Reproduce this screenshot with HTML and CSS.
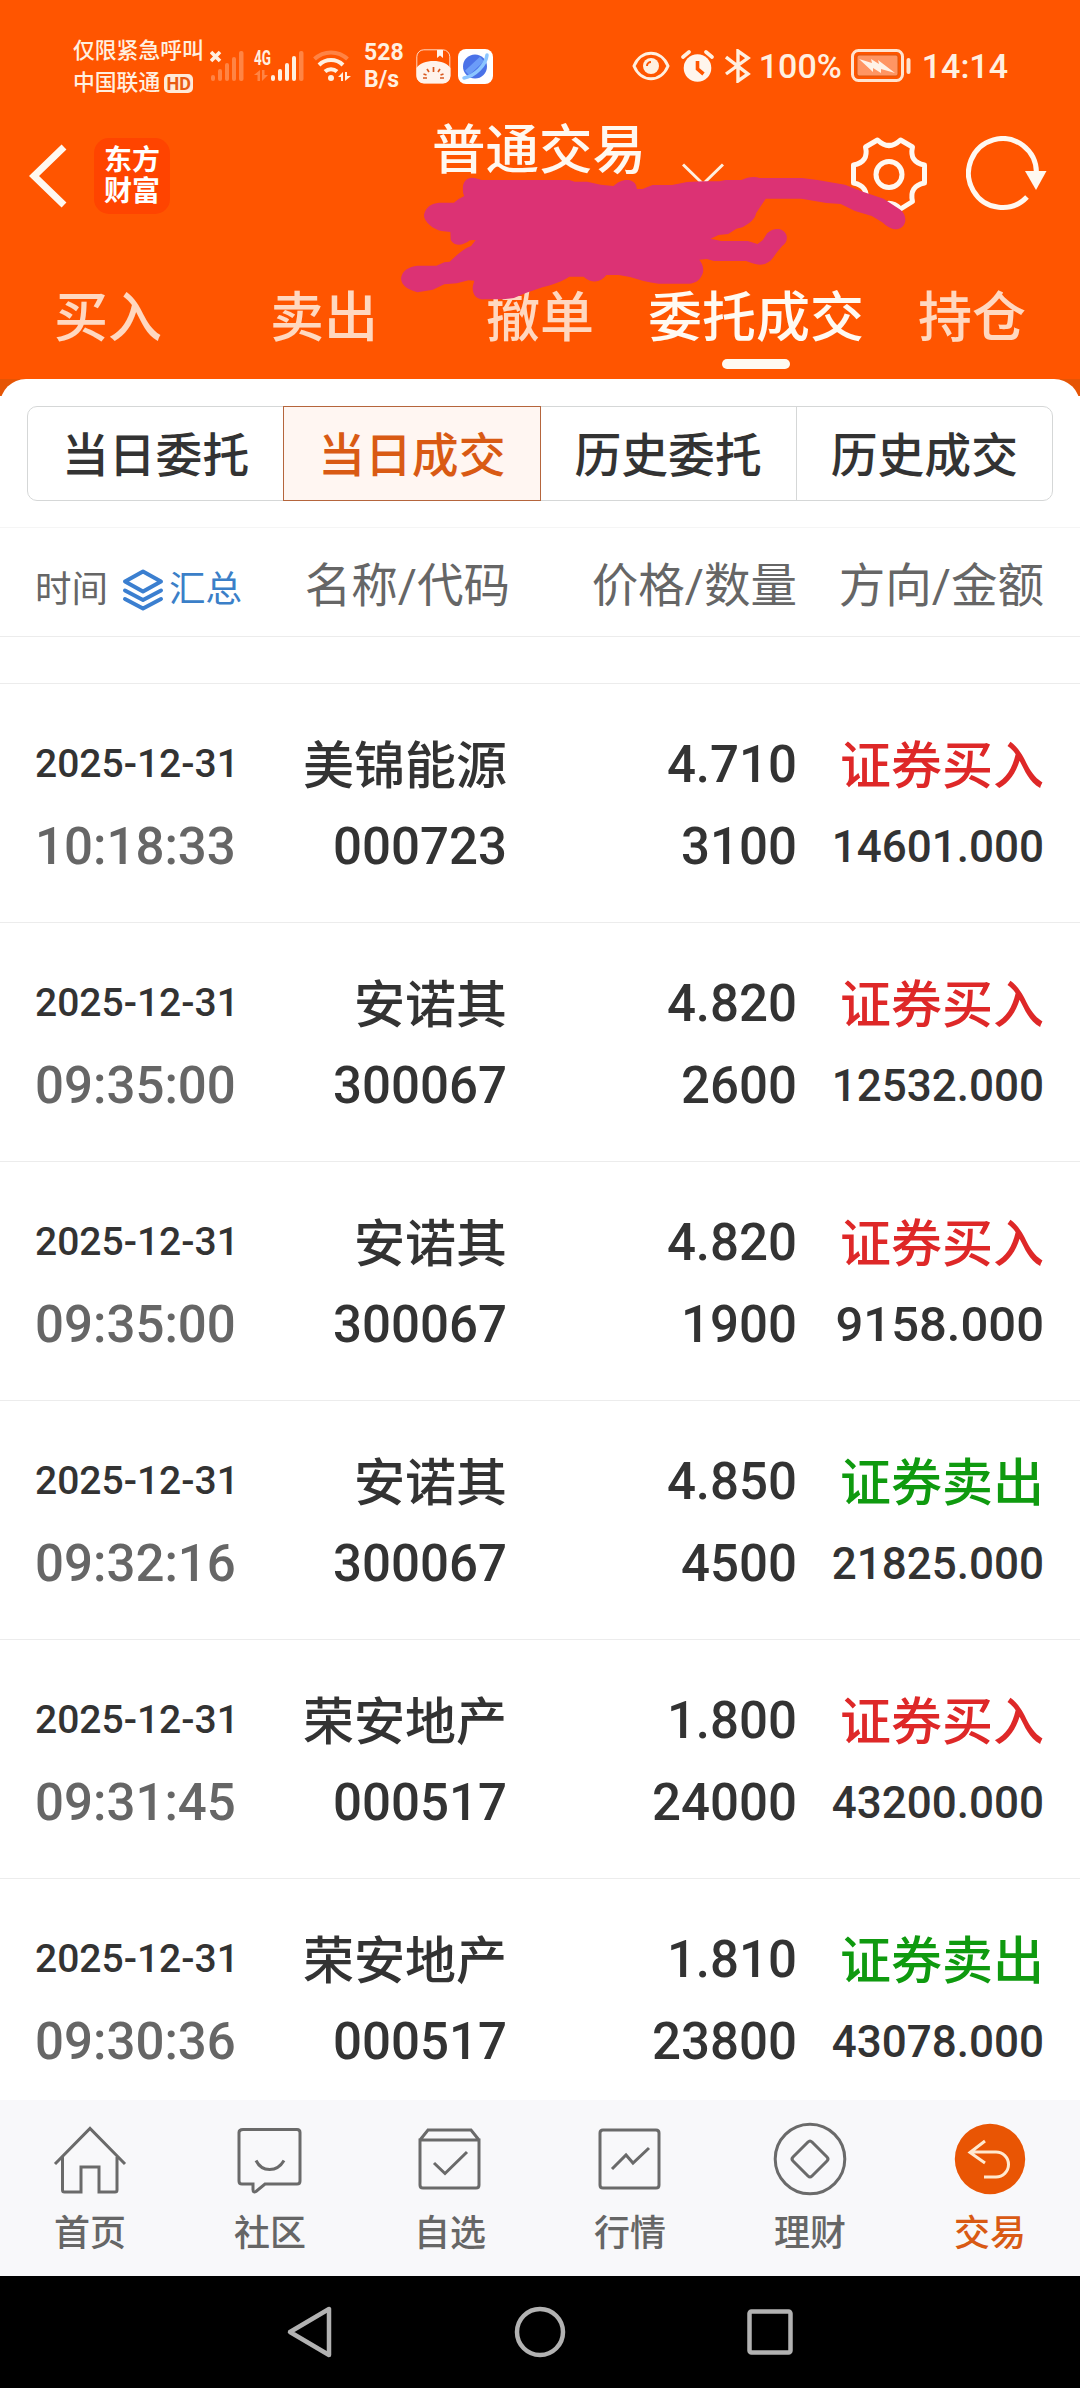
FILE: index.html
```html
<!DOCTYPE html>
<html lang="zh-CN">
<head>
  <meta charset="UTF-8"/><meta name="viewport" content="width=device-width, initial-scale=1.0"/>
  <title>普通交易 - 当日成交</title>
  <link rel="stylesheet" href="styles.css">
</head>
<body>
  <header class="top">
    <div class="status">
      <div class="carrier">
        <span>仅限紧急呼叫</span>
        <span class="op">中国联通<b class="hd">HD</b></span>
      </div>
      <svg class="sig1" width="34" height="32" viewBox="0 0 34 32" fill="#fff0e0">
        <path d="M1 2l9 9M10 2l-9 9" stroke="#fff0e0" stroke-width="3.600"/>
        <g opacity=".3"><rect x="1" y="25" width="4" height="6" rx="2"/><rect x="8" y="19" width="4" height="12" rx="2"/><rect x="15" y="13" width="4" height="18" rx="2"/><rect x="22" y="7" width="4" height="24" rx="2"/><rect x="29" y="1" width="4.500" height="30" rx="2"/></g>
      </svg>
      <svg class="sig2" width="50" height="32" viewBox="0 0 50 32" fill="#fff0e0">
        <text x="0" y="15" class="g4" textLength="17" lengthAdjust="spacingAndGlyphs">4G</text>
        <g opacity=".3"><path d="M6 20v11H3.500v-6H0zM8 20h2.500v5H14L8 31z"/><rect x="45" y="1" width="4.500" height="30" rx="2"/></g>
        <rect x="17" y="25" width="4" height="6" rx="2"/><rect x="24" y="19" width="4" height="12" rx="2"/><rect x="31" y="13" width="4" height="18" rx="2"/><rect x="38" y="6" width="4" height="25" rx="2"/>
      </svg>
      <svg class="wifi" width="40" height="32" viewBox="0 0 40 32" fill="none" stroke="#fff0e0" stroke-width="4">
        <path d="M1.500 9a24 24 0 0 1 33 0" opacity=".3"/>
        <path d="M6 15a17 17 0 0 1 24 0M12 21.500a9 9 0 0 1 12 0"/>
        <circle cx="18" cy="28" r="3" fill="#fff0e0" stroke="none"/>
        <path d="M30 22v9h-2v-4h-3zM32 22h2v4h4l-6 5z" fill="#fff0e0" stroke="none"/>
      </svg>
      <div class="speed"><span>528</span><span>B/s</span></div>
      <svg class="app1" width="35" height="35" viewBox="0 0 35 35">
        <rect x=".8" y=".8" width="33" height="33" rx="7" fill="none" stroke="#ffd9c4"/>
        <path d="M.5 19C6 9.500 29 9.500 34.500 19v8a7.500 7.500 0 0 1-7.500 7.500H8A7.500 7.500 0 0 1 .5 27z" fill="#fff3ec"/>
        <path d="M21 1h6v8l-3-2.500L21 9z" fill="#fff3ec"/>
        <path d="M17.500 18v5M11 20l2 3M24 20l-2 3M7.500 25l3 1M27.500 25l-3 1M7 29h4M24 29h4" stroke="#d95a20" stroke-width="1.700"/>
      </svg>
      <svg class="app2" width="35" height="35" viewBox="0 0 35 35">
        <rect width="35" height="35" rx="8" fill="#fff"/>
        <circle cx="17" cy="17.500" r="12" fill="#4a72e8"/>
        <path d="M9 24L24 10" stroke="#6b9cf8" stroke-width="6"/>
        <path d="M6 29C17 27 28 16 29 6" stroke="#8cc6ff" stroke-width="3.500" fill="none" stroke-linecap="round"/>
      </svg>
      <div class="right">
        <svg width="38" height="30" viewBox="0 0 38 30"><path d="M2 15C9-2 29-2 36 15C29 32 9 32 2 15z" fill="none" stroke="#fff0e0" stroke-width="3"/><circle cx="19" cy="15" r="8" fill="#fff0e0"/><path d="M15 15a4 4 0 0 1 4-4" stroke="#ff5500" stroke-width="2" fill="none"/></svg>
        <svg class="alarm" width="33" height="32" viewBox="0 0 33 32"><circle cx="16.500" cy="18" r="13.800" fill="#fff5ec"/><path d="M2 7l6-5M31 7l-6-5" stroke="#fff0e0" stroke-width="3.600" stroke-linecap="round"/><path d="M16.500 11v8l6 5" stroke="#ff5500" stroke-width="3.600" fill="none"/></svg>
        <svg class="bt" width="26" height="34" viewBox="0 0 26 34" fill="none" stroke="#fff0e0" stroke-width="3.400"><path d="M1 8l22 17-10 7V2l10 7L1 25"/></svg>
        <span class="pct">100%</span>
        <svg class="batt" width="60" height="34" viewBox="0 0 60 34"><rect x="1.500" y="1.500" width="50" height="30" rx="6" fill="none" stroke="#ffe3cf" stroke-width="3"/><rect x="6" y="6" width="41" height="21" rx="2" fill="#ff9563" stroke="#d9560f"/><path d="M8 10l13 4-1-4 8 5-1-4 17 13-14-4v4l-8-5v4z" fill="#fff3e8"/><rect x="55.500" y="9" width="4" height="16" rx="2" fill="#ffe3cf"/></svg>
        <span class="clock">14:14</span>
      </div>
    </div>
    <div class="bar">
      <svg class="back" width="38" height="64" viewBox="0 0 38 64" fill="none" stroke="#fff8f0" stroke-width="7"><path d="M35 3L5 32l30 29"/></svg>
      <div class="logo"><span>东方</span><span>财富</span></div>
      <h1>普通交易</h1>
      <svg class="down" width="42" height="24" viewBox="0 0 42 24" fill="none" stroke="#fff0e0" stroke-width="3"><path d="M1 1.500l20 19.500 20-19.500"/></svg>
      <svg class="gear" width="80" height="78" viewBox="0 0 80 78" fill="none" stroke="#fff8f0" stroke-width="5" stroke-linejoin="round">
        <path d="M28.500 4Q40 15 51.500 4L63.500 11Q60 26 75.500 29V47Q60 50 63.500 65.500L51.500 73Q40 62 28.500 73L16.500 65.500Q20 50 4.500 47V29Q20 26 16.500 11z"/>
        <circle cx="40" cy="38.500" r="13"/>
      </svg>
      <svg class="reload" width="82" height="78" viewBox="0 0 82 78"><path d="M61 61A34 34.500 0 1 1 70.500 37" fill="none" stroke="#fff8f0" stroke-width="5"/><path d="M59 35h21.500L70 54z" fill="#fff8f0"/></svg>
    </div>
    <nav class="tabs">
      <a>买入</a><a>卖出</a><a>撤单</a><a class="on">委托成交</a><a>持仓</a>
    </nav>
    <!-- 账号涂抹 -->
    <svg class="scrawl" width="560" height="220" viewBox="0 0 1568 660" preserveAspectRatio="none">
      <path fill="#dc3274" d="M232 264C232 240 250 228 272 236L285 240H530L545 245H580L618 254L654 258C665 246 680 238 697 240C710 243 719 252 719 267H735L763 255H818L860 246L905 244H950L968 240H1012C1030 230 1050 228 1063 234H1182L1225 240L1302 254L1352 275L1410 296L1455 328C1468 338 1471 350 1471 362C1469 378 1457 389 1440 388C1425 385 1412 372 1405 366L1377 348L1330 333L1290 312L1250 309L1180 296H1080L1065 320L1053 340C1050 358 1035 370 1015 382L998 386L975 402L948 405L926 416L955 423H1030L1057 432L1072 420L1084 400C1102 382 1128 382 1138 405C1142 422 1135 432 1126 438L1112 456L1100 474C1085 495 1065 498 1043 490L1025 483H935L915 477L894 479C904 492 908 508 903 522C896 540 885 550 865 551H780C750 547 725 540 700 531L668 525H634C618 547 595 553 570 530H530C510 545 485 553 455 562L410 578L375 594L345 598H290C267 600 257 578 260 558L264 542L248 541L215 550L180 553L148 569L105 577C80 570 59 557 59 535C62 512 80 500 105 497H158L180 487L195 485C215 465 232 447 255 438L268 420L252 421C230 438 210 440 198 420L197 396L172 393C150 388 123 367 123 345C128 320 145 310 165 308H207L220 297L236 288C232 280 232 275 232 264Z"/>
    </svg>
  </header>

  <main>
    <div class="seg"><a>当日委托</a><a class="on">当日成交</a><a>历史委托</a><a>历史成交</a></div>
    <div class="thead">
      <div class="tm">时间
        <svg width="42" height="42" viewBox="0 0 42 42" fill="none" stroke="#3b7fd0" stroke-width="4" stroke-linejoin="round" stroke-linecap="round"><path d="M21 2.500L39 12.500 21 22.500 3 12.500zM3 21.500l18 9.500 18-9.500M3 30l18 9.500L39 30"/></svg>
        <span class="sum">汇总</span>
      </div>
      <div class="nm">名称/代码</div><div>价格/数量</div><div>方向/金额</div>
    </div>
    <div class="rest"></div>

    <div class="row">
      <div class="t"><p class="date">2025-12-31</p><p class="time">10:18:33</p></div>
      <div><p class="cn">美锦能源</p><p>000723</p></div>
      <div><p>4.710</p><p>3100</p></div>
      <div><p class="cn buy">证券买入</p><p class="amt">14601.000</p></div>
    </div>
    <div class="row">
      <div class="t"><p class="date">2025-12-31</p><p class="time">09:35:00</p></div>
      <div><p class="cn">安诺其</p><p>300067</p></div>
      <div><p>4.820</p><p>2600</p></div>
      <div><p class="cn buy">证券买入</p><p class="amt">12532.000</p></div>
    </div>
    <div class="row">
      <div class="t"><p class="date">2025-12-31</p><p class="time">09:35:00</p></div>
      <div><p class="cn">安诺其</p><p>300067</p></div>
      <div><p>4.820</p><p>1900</p></div>
      <div><p class="cn buy">证券买入</p><p class="amt big">9158.000</p></div>
    </div>
    <div class="row">
      <div class="t"><p class="date">2025-12-31</p><p class="time">09:32:16</p></div>
      <div><p class="cn">安诺其</p><p>300067</p></div>
      <div><p>4.850</p><p>4500</p></div>
      <div><p class="cn sell">证券卖出</p><p class="amt">21825.000</p></div>
    </div>
    <div class="row">
      <div class="t"><p class="date">2025-12-31</p><p class="time">09:31:45</p></div>
      <div><p class="cn">荣安地产</p><p>000517</p></div>
      <div><p>1.800</p><p>24000</p></div>
      <div><p class="cn buy">证券买入</p><p class="amt">43200.000</p></div>
    </div>
    <div class="row">
      <div class="t"><p class="date">2025-12-31</p><p class="time">09:30:36</p></div>
      <div><p class="cn">荣安地产</p><p>000517</p></div>
      <div><p>1.810</p><p>23800</p></div>
      <div><p class="cn sell">证券卖出</p><p class="amt">43078.000</p></div>
    </div>
  </main>

  <nav class="menu">
    <a><svg viewBox="0 0 76 76"><path d="M3 44L38 8.500 73 44M10.500 37v33q0 2 2 2H29V47h18v25h16q2 0 2-2V37"/></svg>首页</a>
    <a><svg viewBox="0 0 76 76"><path d="M11 9.500h54q3 0 3 3V61q0 3-3 3H33l-9 7.500q-3 1.500-3-2V64H10q-3 0-3-3V12.500q0-3 4-3zM24 40.500c6 12 21 12 28 0"/></svg>社区</a>
    <a><svg viewBox="0 0 76 76"><path d="M8 20v45q0 3 3 3h53q3 0 3-3V20zM8 20l8-10h43l8 10M22 43l11 10.500L55 32"/></svg>自选</a>
    <a><svg viewBox="0 0 76 76"><path d="M11 10h53q3 0 3 3v52q0 3-3 3H11q-3 0-3-3V13q0-3 3-3zM20 49l14-14 7 8 16-15"/></svg>行情</a>
    <a><svg viewBox="0 0 76 76"><circle cx="38" cy="39" r="34.800"/><path d="M36 22q2-2 4 0l15 15q2 2 0 4L40 56q-2 2-4 0L21 41q-2-2 0-4z"/></svg>理财</a>
    <a class="on"><svg viewBox="0 0 76 76"><circle cx="38" cy="39" r="35.200" class="disc"/><path class="arr" d="M33 21L18 32.500 33 43M19 32h25a12.500 12.500 0 0 1 0 25H32"/></svg>交易</a>
  </nav>

  <footer class="sys">
    <svg width="50" height="56" viewBox="0 0 50 56"><path d="M44 5v46L5 28z"/></svg>
    <svg width="54" height="56" viewBox="0 0 54 56"><circle cx="27" cy="28" r="23"/></svg>
    <svg width="50" height="56" viewBox="0 0 50 56"><rect x="4.500" y="7.500" width="41" height="41" rx="2"/></svg>
  </footer>
</body>
</html>
```

FILE: styles.css
```css
*{box-sizing:border-box;}
body{margin:0;width:1080px;height:2388px;background:#fff;font-family:Roboto,"Noto Sans CJK SC",sans-serif;font-weight:500;color:#333;display:flex;flex-direction:column;overflow:hidden;}
svg{display:block;flex:none;}
p,h1{margin:0;font-weight:500;}

.top{position:relative;height:396px;background:linear-gradient(#ff5500 379px,#e65505 379px);}
.status{height:132px;padding:0 72px 0 73px;display:flex;align-items:center;color:#fff0e0;}
.carrier{width:137px;display:flex;flex-direction:column;font-size:21.800px;line-height:32px;padding-top:2px;white-space:nowrap;}
.op{display:flex;align-items:center;}
.hd{width:29px;height:19px;margin-left:4px;border-radius:5px;background:#ffead8;color:#e85a10;font-size:18px;line-height:20px;text-align:center;font-weight:700;}
.sig2{margin-left:10px;overflow:visible;}
.g4{font-size:20px;font-weight:700;}
.wifi{margin-left:9px;}
.speed{width:51px;margin-left:11px;display:flex;flex-direction:column;font-size:23px;line-height:27px;font-weight:700;}
.app1{margin-left:1px;}
.app2{margin-left:7px;}
.right{margin-left:auto;display:flex;align-items:center;}
.alarm{margin-left:11px;}
.bt{margin-left:11px;}
.pct,.clock{font-size:34px;line-height:40px;}
.pct{width:85px;margin-left:8px;}
.batt{margin-left:7px;}
.clock{margin-left:11px;}

.bar{height:132px;padding-bottom:46px;display:flex;align-items:center;}
.back{margin:2px 0 0 29px;}
.logo{width:76px;height:76px;margin:2px 0 0 27px;border-radius:15px;background:#ff4400;color:#fff;font-size:28px;line-height:31px;font-weight:700;display:flex;flex-direction:column;align-items:center;justify-content:center;}
h1{margin-left:262px;margin-top:-48px;width:217px;font-size:53.500px;line-height:60px;color:#fff8f0;white-space:nowrap;}
.down{margin-left:33px;}
.gear{margin-left:125px;}
.reload{margin-left:37px;}
.tabs{display:flex;height:115px;}
.tabs a{flex:1;display:flex;flex-direction:column;align-items:center;font-size:54px;line-height:110px;color:#ffd8c0;white-space:nowrap;}
.tabs .on{color:#fffaf2;}
.tabs .on::after{content:"";width:68px;height:10px;margin-top:-15px;border-radius:5px;background:#fffaf2;}
.scrawl{position:absolute;left:380px;top:100px;}

main{position:relative;margin-top:-17px;height:1721px;background:#fff;border-radius:26px 26px 0 0;overflow:hidden;}
.seg{display:flex;margin:27px 27px 26px;height:95px;border:1px solid #d5d7d7;border-radius:10px;}
.seg a{flex:1;text-align:center;font-size:46.800px;line-height:98px;}
.seg a+a{border-left:1px solid #d5d7d7;}
.seg .on{margin:-1px 0;border:1px solid #b5653c!important;background:#fff6f2;color:#d95a14;}
.seg .on+a{border-left:0;}

.thead,.row{display:grid;grid-template-columns:220px 252px 290px 247px;padding:0 35px;text-align:right;white-space:nowrap;}
.thead{height:110px;border-top:1px solid #f5f5f5;border-bottom:1px solid #ececec;font-size:46.500px;line-height:116px;font-weight:400;color:#666;}
.nm{margin-right:-3px;}
.tm{display:flex;align-items:center;font-size:36.500px;padding-top:8px;line-height:100px;}
.tm svg{margin:0 5px 0 14px;}
.sum{color:#3b7fc8;}
.rest{height:46px;}
.row{height:239px;border-top:1px solid #ececec;padding-top:40px;font-size:51px;line-height:82px;}
.t{text-align:left;}
.cn{line-height:85px;margin-bottom:-3px;}
.date{font-size:39px;line-height:81px;margin-bottom:1px;}
.time{color:#666;}
.buy{color:#de2828;}
.sell{color:#0f9a0f;}
.amt{font-size:44px;}
.big{font-size:49px;}

.menu{position:relative;height:176px;background:#f8f8fa;display:flex;}
.menu a{flex:1;display:flex;flex-direction:column;align-items:center;padding-top:20px;font-size:36px;line-height:76px;color:#666;}
.menu svg{width:76px;height:76px;fill:none;stroke:#6a6a6a;stroke-width:3;}
.menu .on{color:#d95a14;}
.menu .disc{fill:#e95504;stroke:none;}
.menu .arr{stroke:#ffe9d0;}

.sys{height:112px;background:#000;display:flex;justify-content:center;align-items:center;gap:178px;}
.sys svg{fill:none;stroke:#b2b2b2;stroke-width:4.500;stroke-linejoin:round;}
```
